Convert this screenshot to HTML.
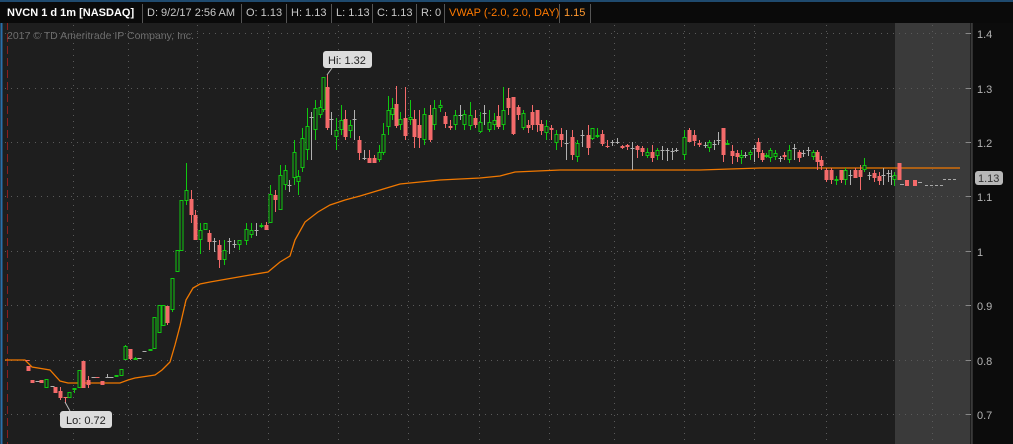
<!DOCTYPE html>
<html><head><meta charset="utf-8"><style>
html,body{margin:0;padding:0;background:#1e1e1e;width:1013px;height:444px;overflow:hidden;font-family:"Liberation Sans",sans-serif}
#hdr{position:absolute;left:0;top:0;width:1013px;height:23px;background:#0a0a0a;border-top:2px solid #1f4a6e;box-sizing:border-box}
.c{position:absolute;top:2px;height:19px;line-height:19px;font-size:11px;color:#c8c8c8;border-right:1px solid #555;box-sizing:border-box;padding-left:4px;white-space:nowrap;overflow:hidden}
</style></head><body>
<svg width="1013" height="444" style="position:absolute;left:0;top:0">
<rect x="0" y="0" width="1013" height="444" fill="#1e1e1e"/>
<rect x="895" y="22" width="75" height="422" fill="#3a3a3a"/>
<rect x="972" y="0" width="41" height="444" fill="#0c0c0c"/>
<line x1="972" y1="22" x2="972" y2="444" stroke="#555"/>
<g stroke="#5a5a5a" stroke-dasharray="1 5" stroke-width="1">
<line x1="5" y1="33.5" x2="968" y2="33.5"/><line x1="5" y1="88.5" x2="968" y2="88.5"/><line x1="5" y1="142.5" x2="968" y2="142.5"/><line x1="5" y1="196.5" x2="968" y2="196.5"/><line x1="5" y1="251.5" x2="968" y2="251.5"/><line x1="5" y1="305.5" x2="968" y2="305.5"/><line x1="5" y1="360.5" x2="968" y2="360.5"/><line x1="5" y1="414.5" x2="968" y2="414.5"/>
<line x1="73.5" y1="25" x2="73.5" y2="444"/><line x1="128.5" y1="25" x2="128.5" y2="444"/><line x1="197.5" y1="25" x2="197.5" y2="444"/><line x1="268.5" y1="25" x2="268.5" y2="444"/><line x1="338.5" y1="25" x2="338.5" y2="444"/><line x1="408.5" y1="25" x2="408.5" y2="444"/><line x1="479.5" y1="25" x2="479.5" y2="444"/><line x1="549.5" y1="25" x2="549.5" y2="444"/><line x1="614.5" y1="25" x2="614.5" y2="444"/><line x1="684.5" y1="25" x2="684.5" y2="444"/><line x1="754.5" y1="25" x2="754.5" y2="444"/><line x1="826.5" y1="25" x2="826.5" y2="444"/><line x1="932.5" y1="25" x2="932.5" y2="444"/>
</g>
<line x1="1.5" y1="22" x2="1.5" y2="444" stroke="#2a6fa8" stroke-width="2"/>
<line x1="7.5" y1="22" x2="7.5" y2="444" stroke="#8a1f1f" stroke-dasharray="8 4"/>
<g stroke="#888"><line x1="966" y1="33.5" x2="971" y2="33.5"/><line x1="966" y1="88.5" x2="971" y2="88.5"/><line x1="966" y1="142.5" x2="971" y2="142.5"/><line x1="966" y1="196.5" x2="971" y2="196.5"/><line x1="966" y1="251.5" x2="971" y2="251.5"/><line x1="966" y1="305.5" x2="971" y2="305.5"/><line x1="966" y1="360.5" x2="971" y2="360.5"/><line x1="966" y1="414.5" x2="971" y2="414.5"/></g>
<g fill="#b4b4b4" font-size="11" font-family="Liberation Sans,sans-serif">
<text x="977" y="38">1.4</text><text x="977" y="93">1.3</text><text x="977" y="147">1.2</text><text x="977" y="201">1.1</text><text x="977" y="256">1</text><text x="977" y="310">0.9</text><text x="977" y="365">0.8</text><text x="977" y="419">0.7</text>
</g>
<rect x="975" y="171" width="28" height="14" rx="3" fill="#b8b8b8"/>
<text x="978" y="182" font-size="11" fill="#333">1.13</text>
<g stroke="#ddd" stroke-width="1.5" fill="none"><line x1="979" y1="5" x2="994" y2="5"/><line x1="979" y1="18" x2="994" y2="18"/><path d="M979 16 C984 16 985 8 988 8 C990 8 991 10 993 10"/></g>
<text x="7" y="39" font-size="10.5" fill="#6e6e6e">2017 © TD Ameritrade IP Company, Inc.</text>
<polyline fill="none" stroke="#f07800" stroke-width="1.3" points="5,360 25,360 32,367 50,370 60,381 68,383 120,383 128,380 135,378 155,375 162,370 170,362 175,345 180,326 186,300 193,288 200,284 210,282 250,275 268,272 280,262 290,256 295,240 305,222 318,212 330,205 345,200 360,196 380,190 400,184 420,182 440,180 480,178 500,176 515,172 560,170 700,170 760,168 960,168"/>
<g id="cd"></g>
<g fill="#a8a8a8"><rect x="900" y="184" width="4" height="1"/><rect x="918" y="182" width="4" height="1"/><rect x="925" y="185" width="3" height="1"/><rect x="930" y="185" width="3" height="1"/><rect x="935" y="185" width="3" height="1"/><rect x="940" y="185" width="3" height="1"/><rect x="943" y="179" width="3" height="1"/><rect x="948" y="179" width="3" height="1"/><rect x="953" y="179" width="3" height="1"/></g>
<g fill="#f46a6a"><rect x="905" y="180" width="4" height="6"/><rect x="913" y="180" width="4" height="6"/></g>
<path d="M332 68 L327 75" stroke="#bbb"/>
<rect x="323" y="51" width="49" height="17" rx="3" fill="#dcdcdc"/>
<text x="328" y="64" font-size="11" fill="#222">Hi: 1.32</text>
<path d="M65 402 L70 411" stroke="#bbb"/>
<rect x="60" y="411" width="52" height="17" rx="3" fill="#dcdcdc"/>
<text x="66" y="424" font-size="11" fill="#222">Lo: 0.72</text>
</svg>
<div id="hdr">
<div class="c" style="left:0;width:143px;color:#fff;font-weight:bold;padding-left:7px">NVCN 1 d 1m [NASDAQ]</div>
<div class="c" style="left:143px;width:99px">D: 9/2/17 2:56 AM</div>
<div class="c" style="left:242px;width:45px">O: 1.13</div>
<div class="c" style="left:287px;width:45px">H: 1.13</div>
<div class="c" style="left:332px;width:41px">L: 1.13</div>
<div class="c" style="left:373px;width:44px">C: 1.13</div>
<div class="c" style="left:417px;width:28px">R: 0</div>
<div class="c" style="left:445px;width:115px;color:#ff7a00">VWAP (-2.0, 2.0, DAY)</div>
<div class="c" style="left:560px;width:31px;color:#ff9a30">1.15</div>
</div>
<script>
var d="27,360,361,360,361,r|28,366,371,366,371,r|32,380,383,380,383,r|37,381,382,381,382,w|41,380,383,380,383,r|46,379,388,379,388,g|52,386,387,386,387,w|55,387,393,387,393,r|60,391,398,387,400,r|65,397,398,397,403,r|69,392,398,392,398,g|74,388,390,388,393,g|79,370,388,370,388,g|83,361,388,361,388,r|88,380,385,376,388,r|93,377,378,377,378,w|97,377,378,377,378,r|102,381,385,381,385,r|107,377,378,374,378,w|111,377,378,377,378,w|116,375,377,375,377,g|121,369,376,369,376,g|125,346,360,345,360,g|130,349,359,349,360,r|135,358,359,357,359,g|139,358,359,358,359,w|144,351,352,351,352,w|150,349,350,349,350,g|154,317,349,317,349,g|159,305,333,305,333,g|163,305,326,305,326,g|167,306,323,306,325,r|172,278,310,278,312,g|177,250,272,250,272,g|181,200,251,200,251,g|186,190,201,163,205,g|191,199,215,190,223,r|195,215,240,210,240,r|200,230,240,223,254,g|205,223,230,223,230,g|209,233,242,230,250,r|214,241,242,238,252,w|219,245,260,240,268,r|224,250,260,240,265,g|229,241,242,238,254,w|234,244,245,240,248,w|239,240,245,240,250,g|246,229,241,223,245,g|251,230,235,223,238,g|256,230,231,223,236,w|261,225,226,223,228,g|266,225,230,222,230,r|270,194,223,185,223,g|275,195,200,190,212,r|280,175,210,165,210,g|285,170,185,165,190,g|289,185,186,180,192,w|294,152,178,140,185,g|298,176,182,170,195,g|302,138,168,128,172,g|307,126,150,108,160,g|311,117,140,112,160,w|315,108,130,100,140,g|320,107,115,100,118,g|323,77,110,77,112,g|327,87,128,75,130,r|331,119,120,112,135,w|336,130,137,118,150,g|341,120,130,105,135,g|345,119,137,110,140,r|350,125,131,120,138,g|354,119,120,110,140,w|359,140,153,136,160,r|364,158,159,150,160,w|369,158,163,150,163,r|374,158,163,155,163,r|379,152,160,145,162,g|383,134,153,123,155,g|388,110,127,96,135,g|392,108,115,98,120,g|396,104,126,86,128,r|400,119,125,112,130,g|405,118,136,87,140,r|410,117,120,100,125,g|414,119,137,110,148,r|419,125,138,110,148,r|424,114,140,108,145,g|430,115,140,105,142,r|434,108,125,100,130,g|440,105,108,100,112,g|445,116,124,112,128,r|450,126,128,120,130,r|455,115,125,110,130,g|460,115,116,105,120,w|464,114,125,110,130,g|470,115,126,102,130,g|475,118,125,110,128,r|480,122,132,112,133,g|484,113,117,105,125,w|489,122,130,110,132,g|494,120,125,113,130,g|498,116,127,105,129,r|503,110,125,87,130,g|508,98,108,88,115,r|513,97,134,97,135,r|518,107,115,105,120,r|523,113,128,110,130,g|528,125,128,120,133,r|532,112,125,105,130,r|537,110,125,110,132,r|541,124,131,120,135,r|546,126,133,120,140,g|551,128,130,125,140,r|556,134,143,130,150,g|561,134,140,128,147,r|566,143,144,130,160,w|572,137,155,130,160,r|577,143,157,140,162,g|582,135,145,130,147,w|588,135,148,125,155,r|592,128,139,128,140,g|597,135,136,128,138,g|602,134,144,130,146,r|607,146,147,140,148,r|612,142,145,140,146,w|617,142,143,138,144,w|622,146,148,145,149,r|627,145,147,144,150,r|632,148,150,142,170,w|637,146,150,145,158,r|642,148,152,146,156,r|647,152,156,148,158,g|652,152,158,145,162,r|657,150,156,148,160,g|662,150,155,146,160,w|667,150,156,148,161,w|672,151,152,148,160,w|676,150,151,148,152,w|684,137,155,130,160,g|689,130,142,128,142,r|694,135,141,130,146,r|699,143,145,140,147,r|705,145,146,142,148,w|709,142,148,140,152,g|714,144,145,140,150,w|718,140,145,132,145,w|723,128,155,130,162,r|727,143,145,140,145,g|732,151,156,145,164,r|737,153,157,150,162,r|741,155,158,150,164,g|745,155,156,152,158,w|750,152,155,150,160,g|754,148,158,145,162,w|758,142,152,138,158,r|762,153,160,150,162,r|766,155,156,153,158,g|770,150,158,148,162,g|775,153,157,150,160,g|780,158,159,156,162,w|784,155,157,152,160,r|789,150,160,145,163,g|794,148,157,144,160,w|799,152,158,150,162,r|803,153,154,150,157,w|808,150,152,147,156,w|813,152,157,150,160,g|817,152,162,150,170,r|821,160,166,156,170,r|826,170,180,168,182,r|831,170,180,168,184,r|836,179,180,176,185,g|841,170,180,170,183,r|845,170,180,168,185,g|850,175,178,170,185,w|855,170,178,168,178,r|860,170,177,165,190,r|864,165,170,158,172,g|869,175,178,172,180,w|874,173,178,170,182,r|879,176,181,172,185,r|883,175,178,168,185,w|888,173,180,170,182,w|891,176,180,170,185,w|894,175,180,172,186,g|899,163,180,163,180,r";
var s="";d.split("|").forEach(function(r){var a=r.split(",");var x=+a[0],bt=+a[1],bb=+a[2],wt=+a[3],wb=+a[4],c=a[5];
var col=c=="g"?"#10c810":c=="r"?"#f46a6a":"#b0b0b0";
s+='<line x1="'+(x+0.5)+'" y1="'+wt+'" x2="'+(x+0.5)+'" y2="'+wb+'" stroke="'+col+'"/>';
if(c=="g"){if(bb-bt<3)s+='<rect x="'+(x-1.5)+'" y="'+bt+'" width="4" height="'+Math.max(2,bb-bt)+'" fill="'+col+'"/>';else s+='<rect x="'+(x-1)+'" y="'+(bt+0.5)+'" width="3" height="'+(bb-bt-1)+'" fill="#1e1e1e" stroke="'+col+'"/>';}
else if(c=="w")s+='<rect x="'+(x-1.5)+'" y="'+bt+'" width="4" height="1" fill="'+col+'"/>';
else s+='<rect x="'+(x-1.5)+'" y="'+bt+'" width="4" height="'+Math.max(1,bb-bt)+'" fill="'+col+'"/>';});
document.getElementById("cd").innerHTML=s;
</script>
</body></html>
